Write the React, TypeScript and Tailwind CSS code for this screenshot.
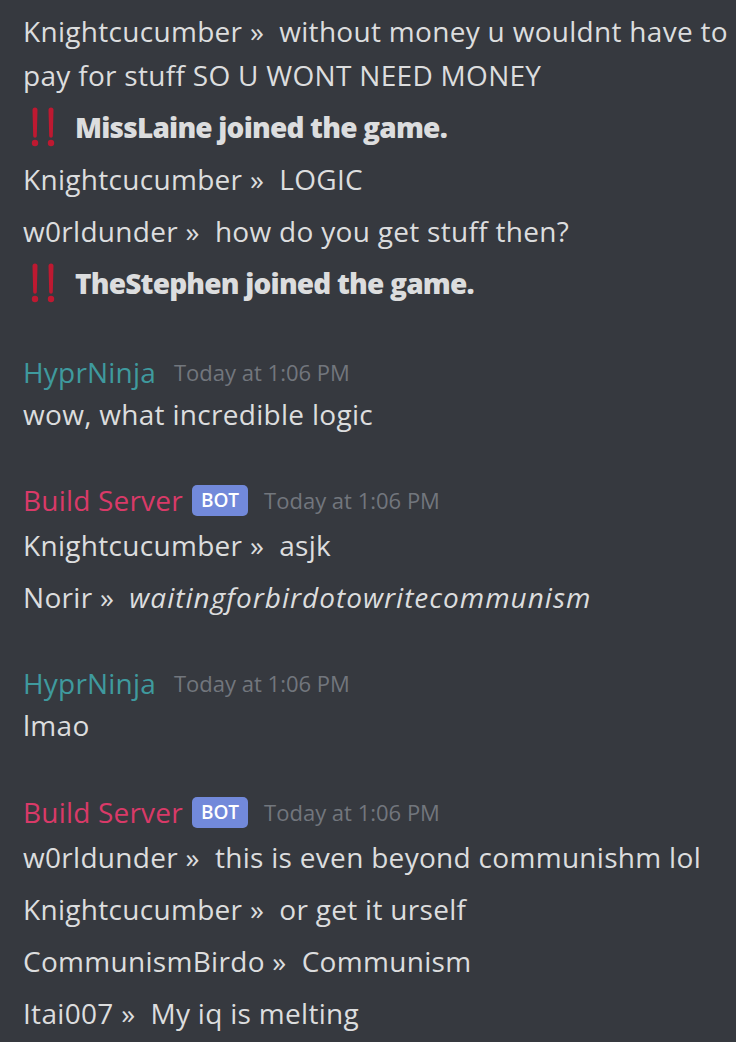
import React from "react";

const font = { fontFamily: "'Open Sans', Lato, sans-serif" };

function Bang() {
  return (
    <svg width="40" height="40" viewBox="0 0 40 40" className="shrink-0">
      <path d="M9.5 3 a2.5 2.5 0 0 1 5 0 L13.8 29 a1.8 1.8 0 0 1 -3.6 0 Z" fill="#be1931" />
      <circle cx="12" cy="36" r="3.2" fill="#be1931" />
      <path d="M25.5 3 a2.5 2.5 0 0 1 5 0 L29.8 29 a1.8 1.8 0 0 1 -3.6 0 Z" fill="#be1931" />
      <circle cx="28" cy="36" r="3.2" fill="#be1931" />
    </svg>
  );
}

function Line({ name, text, italic }: { name?: string; text: string; italic?: boolean }) {
  return (
    <p className="text-[28px] leading-[44px] text-[#dcddde] mb-[8px] tracking-[0.3px]">
      {name ? `${name} \u00bb\u00a0 ` : ""}
      {italic ? <em className="tracking-[1px]">{text}</em> : text}
    </p>
  );
}

function Joined({ text }: { text: string }) {
  return (
    <div className="flex items-center h-[44px] mb-[8px]">
      <Bang />
      <span className="ml-[12px] text-[28px] font-extrabold text-[#dcddde] tracking-[-0.8px]">{text}</span>
    </div>
  );
}

function Header({ name, color, bot }: { name: string; color: string; bot?: boolean }) {
  return (
    <div className={`flex items-center h-[40px] ${bot ? "mb-[3px]" : "mb-0"}`}>
      <span className="text-[28px] tracking-[0.2px]" style={{ color }}>
        {name}
      </span>
      {bot && (
        <span className="ml-[9px] h-[31px] px-[9px] rounded-[5px] bg-[#7289da] text-white text-[19px] leading-[31px] font-semibold">
          BOT
        </span>
      )}
      <span className={`${bot ? "ml-[16px]" : "ml-[18px]"} text-[22px] text-[#72767d]`}>
        Today at 1:06 PM
      </span>
    </div>
  );
}

export default function App() {
  return (
    <div className="w-[736px] h-[1042px] bg-[#36393f] overflow-hidden pl-[23px] pr-[6px] pt-[9px]" style={font}>
      <div>
        <Line name="Knightcucumber" text="without money u wouldnt have to pay for stuff SO U WONT NEED MONEY" />
        <Joined text="MissLaine joined the game." />
        <Line name="Knightcucumber" text="LOGIC" />
        <Line name="w0rldunder" text="how do you get stuff then?" />
        <Joined text="TheStephen joined the game." />
      </div>
      <div className="mt-[47px]">
        <Header name="HyprNinja" color="#3f9a9e" />
        <Line text="wow, what incredible logic" />
      </div>
      <div className="mt-[44px]">
        <Header name="Build Server" color="#d93a68" bot />
        <Line name="Knightcucumber" text="asjk" />
        <Line name="Norir" text="waitingforbirdotowritecommunism" italic />
      </div>
      <div className="mt-[44px]">
        <Header name="HyprNinja" color="#3f9a9e" />
        <Line text="lmao" />
      </div>
      <div className="mt-[45px]">
        <Header name="Build Server" color="#d93a68" bot />
        <Line name="w0rldunder" text="this is even beyond communishm lol" />
        <Line name="Knightcucumber" text="or get it urself" />
        <Line name="CommunismBirdo" text="Communism" />
        <Line name="Itai007" text="My iq is melting" />
      </div>
    </div>
  );
}
